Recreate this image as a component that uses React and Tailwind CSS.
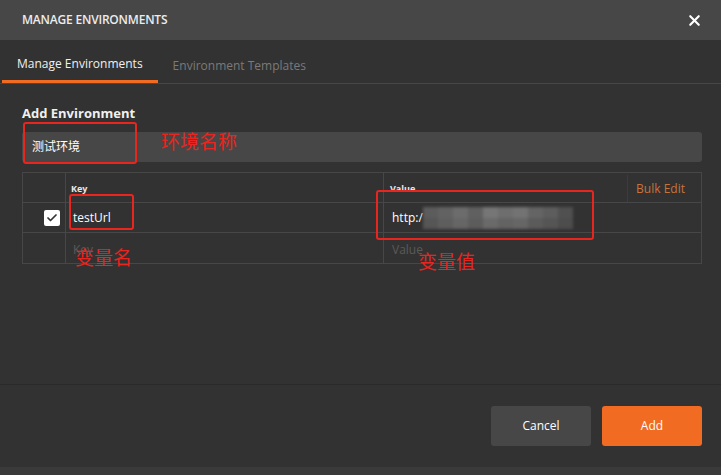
import { X, Check } from 'lucide-react';

const font = { fontFamily: '"Open Sans", "Noto Sans CJK SC", sans-serif' };

const mosaic = [
  ['#5c5c5c', '#626262', '#6c6c6c', '#606060', '#767676', '#6e6e6e', '#737373', '#646464', '#5d5d5d', '#505050'],
  ['#565656', '#5e5e5e', '#666666', '#5c5c5c', '#6a6a6a', '#636363', '#666666', '#5b5b5b', '#555555', '#4d4d4d'],
];

function Annotation({ className }) {
  return <div className={`absolute border-2 border-[#e8251f] rounded-[3px] pointer-events-none ${className}`} />;
}

function RedLabel({ className, children }) {
  return (
    <div className={`absolute text-[19px] leading-none text-[#e8251f] ${className}`} style={{ fontFamily: '"Noto Sans CJK SC", sans-serif' }}>
      {children}
    </div>
  );
}

export default function App() {
  return (
    <div className="w-[721px] h-[475px] bg-[#3a3a3a] relative overflow-hidden" style={font}>
      <div className="h-[467px] bg-[#323232] flex flex-col">
        {/* Header */}
        <div className="h-[40px] bg-[#474747] flex items-center justify-between pl-[22px] pr-[18px] shrink-0">
          <span className="text-[12px] font-semibold text-[#ececec] tracking-[-0.2px]">MANAGE ENVIRONMENTS</span>
          <X className="w-[17px] h-[17px] text-white" strokeWidth={3} />
        </div>

        {/* Tabs */}
        <div className="h-[44px] flex items-end border-b border-[#474747] shrink-0 pl-[2px]">
          <div className="px-[15px] h-full flex items-center border-b-[3px] border-[#f26b22] pt-[8px]">
            <span className="text-[12px] text-[#f0f0f0]">Manage Environments</span>
          </div>
          <div className="px-[15px] h-full flex items-center pt-[8px]">
            <span className="text-[12px] text-[#7a7a7a]">Environment Templates</span>
          </div>
        </div>

        {/* Body */}
        <div className="flex-1 pl-[22px] pr-[19px] pt-[20px]">
          <div className="text-[13px] font-bold text-[#f0f0f0] leading-[18px]">Add Environment</div>
          <div className="mt-[10px] h-[30px] bg-[#474747] rounded-[3px] flex items-center pl-[10px]">
            <span className="text-[12px] text-white">测试环境</span>
          </div>

          <div className="mt-[10px] border border-[#474747]">
            {/* header row */}
            <div className="grid grid-cols-[43px_318px_1fr] h-[30px] border-b border-[#474747]">
              <div className="border-r border-[#474747]" />
              <div className="border-r border-[#474747] flex items-center pl-[5px] pt-[2px]">
                <span className="text-[9px] font-bold text-[#e8e8e8]">Key</span>
              </div>
              <div className="flex items-center justify-between pl-[6px] pt-[2px]">
                <span className="text-[9px] font-bold text-[#e8e8e8]">Value</span>
                <div className="h-full flex items-center border-l border-[#3c3c3c] pl-[8px] pr-[16px]">
                  <span className="text-[12px] text-[#c8733a]">Bulk Edit</span>
                </div>
              </div>
            </div>
            {/* row 1 */}
            <div className="grid grid-cols-[43px_318px_1fr] h-[30px] border-b border-[#474747]">
              <div className="border-r border-[#474747] flex items-center justify-end pr-[5px]">
                <div className="w-[16px] h-[16px] bg-white rounded-[2px] flex items-center justify-center">
                  <Check className="w-[12px] h-[12px] text-[#333]" strokeWidth={3.5} />
                </div>
              </div>
              <div className="border-r border-[#474747] flex items-center pl-[7px]">
                <span className="text-[12px] text-white">testUrl</span>
              </div>
              <div className="flex items-center pl-[8px]">
                <span className="text-[12px] text-white">http:/</span>
                <div className="flex flex-col blur-[1.5px] h-[22px] w-[150px]">
                  {mosaic.map((row, i) => (
                    <div key={i} className="flex flex-1">
                      {row.map((c, j) => (
                        <div key={j} className="flex-1" style={{ backgroundColor: c }} />
                      ))}
                    </div>
                  ))}
                </div>
              </div>
            </div>
            {/* row 2 */}
            <div className="grid grid-cols-[43px_318px_1fr] h-[30px]">
              <div className="border-r border-[#474747]" />
              <div className="border-r border-[#474747] flex items-center pl-[7px] pt-[4px]">
                <span className="text-[12px] text-[#5a5a5a]">Key</span>
              </div>
              <div className="flex items-center pl-[8px] pt-[4px]">
                <span className="text-[12px] text-[#5a5a5a]">Value</span>
              </div>
            </div>
          </div>
        </div>

        {/* Footer */}
        <div className="h-[83px] border-t border-[#2a2a2a] flex items-center justify-end gap-[11px] pr-[19px] pb-[1px] shrink-0">
          <button className="w-[100px] h-[40px] bg-[#474747] rounded-[3px] text-[12px] text-white">Cancel</button>
          <button className="w-[100px] h-[40px] bg-[#f26b22] rounded-[3px] text-[12px] text-white">Add</button>
        </div>
      </div>

      {/* Annotations */}
      <Annotation className="left-[23px] top-[122px] w-[114px] h-[42px]" />
      <RedLabel className="left-[161px] top-[131px]">环境名称</RedLabel>
      <Annotation className="left-[69px] top-[194px] w-[65px] h-[36px]" />
      <RedLabel className="left-[75px] top-[247px]">变量名</RedLabel>
      <Annotation className="left-[376px] top-[190px] w-[218px] h-[50px]" />
      <RedLabel className="left-[418px] top-[251px]">变量值</RedLabel>
    </div>
  );
}
